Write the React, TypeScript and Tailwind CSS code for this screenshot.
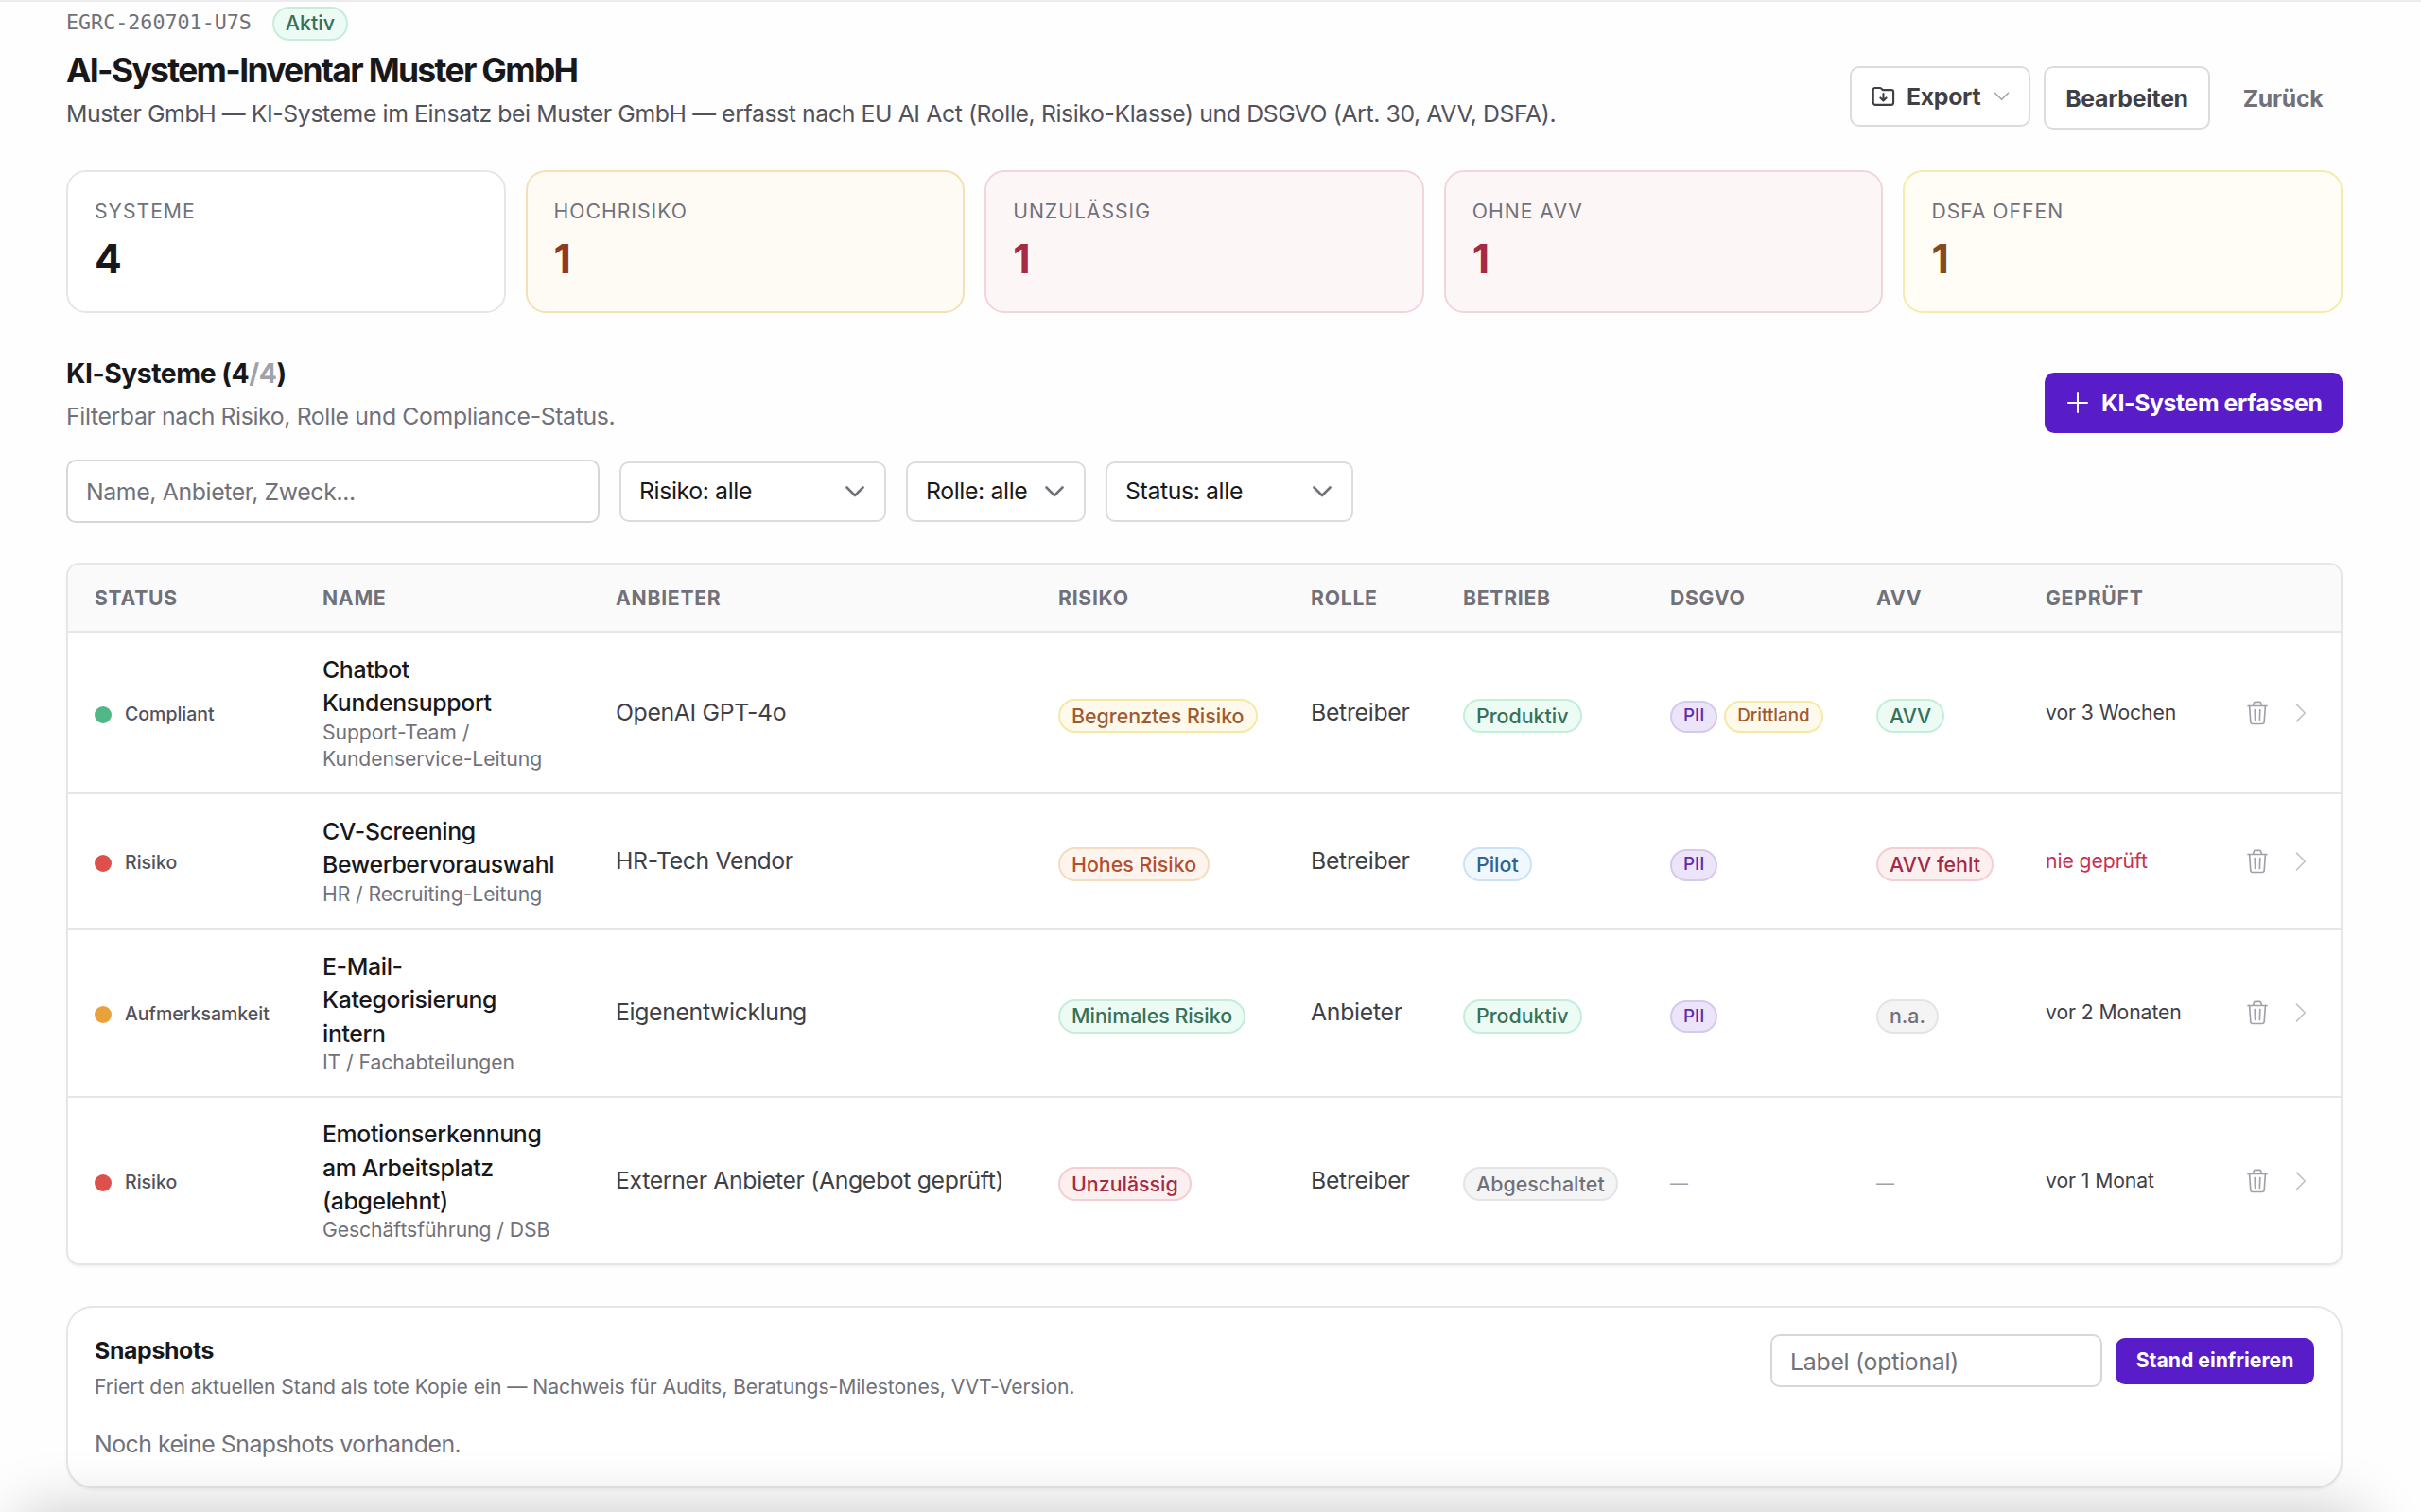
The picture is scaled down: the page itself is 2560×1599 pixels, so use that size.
import clsx from 'clsx';
import type { ReactNode } from 'react';

type Tone = 'green' | 'yellow' | 'orange' | 'red' | 'blue' | 'violet' | 'gray';

const toneClasses: Record<Tone, string> = {
  green: 'border-[#c5eeda] bg-[#ecfbf4] text-[#367158]',
  yellow: 'border-[#f5e9a6] bg-[#fefaeb] text-[#a2592f]',
  orange: 'border-[#f3dcc2] bg-[#fdf5ed] text-[#b34f2f]',
  red: 'border-[#f3cfd4] bg-[#fceff0] text-[#a52a43]',
  blue: 'border-[#cbe3f5] bg-[#f0f8fe] text-[#2d6395]',
  violet: 'border-[#d6c9ee] bg-[#ece5fa] text-[#5f2cb0]',
  gray: 'border-[#e4e4e7] bg-[#f4f4f5] text-[#71717a]',
};

const Badge = ({
  tone,
  small = false,
  children,
}: {
  tone: Tone;
  small?: boolean;
  children: ReactNode;
}) => (
  <span
    className={clsx(
      'inline-flex items-center rounded-full border-2 font-medium whitespace-nowrap',
      small
        ? 'h-[34px] px-[12px] text-[18.8px]'
        : 'h-[36px] px-[12px] text-[21.4px]',
      toneClasses[tone],
    )}
  >
    {children}
  </span>
);

const ChevronDown = ({ className }: { className?: string }) => (
  <svg
    viewBox="0 0 20 12"
    fill="none"
    stroke="currentColor"
    strokeLinecap="round"
    strokeLinejoin="round"
    className={className}
  >
    <path d="M1.5 1.5 10 10l8.5-8.5" />
  </svg>
);

const ChevronRight = () => (
  <svg
    viewBox="0 0 12 20"
    fill="none"
    stroke="currentColor"
    strokeWidth="1.7"
    strokeLinecap="round"
    strokeLinejoin="round"
    className="h-[20px] w-[12px] text-[#c4c4c8]"
  >
    <path d="M1.5 1.2 10.3 10l-8.8 8.8" />
  </svg>
);

const TrashIcon = () => (
  <svg
    viewBox="0 0 24 26"
    fill="none"
    stroke="currentColor"
    strokeWidth="1.7"
    strokeLinecap="round"
    strokeLinejoin="round"
    className="h-[26px] w-[24px] text-[#a1a1aa]"
  >
    <path d="M2 5.5h20M7.5 5.5l.6-2.6A1.8 1.8 0 0 1 9.9 1.4h4.2a1.8 1.8 0 0 1 1.8 1.5l.6 2.6" />
    <path d="m3.6 5.5 1.2 17a2.2 2.2 0 0 0 2.2 2h10a2.2 2.2 0 0 0 2.2-2l1.2-17" />
    <path d="m9.2 9.5.4 11M14.8 9.5l-.4 11" />
  </svg>
);

const FolderDownIcon = () => (
  <svg
    viewBox="0 0 26 22"
    fill="none"
    stroke="currentColor"
    strokeWidth="2.2"
    strokeLinecap="round"
    strokeLinejoin="round"
    className="h-[22px] w-[25px]"
  >
    <path d="M1.8 17.8V3.6a2 2 0 0 1 2-2h5.4a2 2 0 0 1 1.4.6l1.6 1.6h9.8a2 2 0 0 1 2 2v12a2.4 2.4 0 0 1-2.4 2.4H4.2a2.4 2.4 0 0 1-2.4-2.4Z" />
    <path d="M13 8v7.5m-3.2-3 3.2 3.2 3.2-3.2" />
  </svg>
);

const stats = [
  {
    label: 'Systeme',
    value: 4,
    box: 'border-[#e6e6e8] bg-white',
    number: 'text-[#18181b]',
  },
  {
    label: 'Hochrisiko',
    value: 1,
    box: 'border-[#f3e0b5] bg-[#fefbf5]',
    number: 'text-[#8f3a1f]',
  },
  {
    label: 'Unzulässig',
    value: 1,
    box: 'border-[#f1d5dc] bg-[#fdf6f7]',
    number: 'text-[#a52a43]',
  },
  {
    label: 'Ohne AVV',
    value: 1,
    box: 'border-[#f1d5dc] bg-[#fdf6f7]',
    number: 'text-[#a52a43]',
  },
  {
    label: 'DSFA offen',
    value: 1,
    box: 'border-[#f3ecaa] bg-[#fffdf5]',
    number: 'text-[#834a22]',
  },
];

const filters = [
  { label: 'Risiko: alle', width: 'w-[282px]' },
  { label: 'Rolle: alle', width: 'w-[190px]' },
  { label: 'Status: alle', width: 'w-[262px]' },
];

const columns = [
  { label: 'Status', width: 'w-[241px]' },
  { label: 'Name', width: 'w-[310px]' },
  { label: 'Anbieter', width: 'w-[468px]' },
  { label: 'Risiko', width: 'w-[267px]' },
  { label: 'Rolle', width: 'w-[161px]' },
  { label: 'Betrieb', width: 'w-[219px]' },
  { label: 'DSGVO', width: 'w-[218px]' },
  { label: 'AVV', width: 'w-[179px]' },
  { label: 'Geprüft', width: 'w-[212px]' },
];

type Tag = { label: string; tone: Tone };

type AiSystem = {
  status: string;
  dot: string;
  name: string[];
  owner: string[];
  vendor: string;
  risk: Tag;
  role: string;
  operation: Tag;
  gdpr: Tag[];
  avv?: Tag;
  reviewed?: string;
  height: string;
};

const systems: AiSystem[] = [
  {
    status: 'Compliant',
    dot: 'bg-[#52b788]',
    name: ['Chatbot', 'Kundensupport'],
    owner: ['Support-Team /', 'Kundenservice-Leitung'],
    vendor: 'OpenAI GPT-4o',
    risk: { label: 'Begrenztes Risiko', tone: 'yellow' },
    role: 'Betreiber',
    operation: { label: 'Produktiv', tone: 'green' },
    gdpr: [
      { label: 'PII', tone: 'violet' },
      { label: 'Drittland', tone: 'yellow' },
    ],
    avv: { label: 'AVV', tone: 'green' },
    reviewed: 'vor 3 Wochen',
    height: 'h-[171px]',
  },
  {
    status: 'Risiko',
    dot: 'bg-[#de504c]',
    name: ['CV-Screening', 'Bewerbervorauswahl'],
    owner: ['HR / Recruiting-Leitung'],
    vendor: 'HR-Tech Vendor',
    risk: { label: 'Hohes Risiko', tone: 'orange' },
    role: 'Betreiber',
    operation: { label: 'Pilot', tone: 'blue' },
    gdpr: [{ label: 'PII', tone: 'violet' }],
    avv: { label: 'AVV fehlt', tone: 'red' },
    height: 'h-[143px]',
  },
  {
    status: 'Aufmerksamkeit',
    dot: 'bg-[#e9a23b]',
    name: ['E-Mail-', 'Kategorisierung', 'intern'],
    owner: ['IT / Fachabteilungen'],
    vendor: 'Eigenentwicklung',
    risk: { label: 'Minimales Risiko', tone: 'green' },
    role: 'Anbieter',
    operation: { label: 'Produktiv', tone: 'green' },
    gdpr: [{ label: 'PII', tone: 'violet' }],
    avv: { label: 'n.a.', tone: 'gray' },
    reviewed: 'vor 2 Monaten',
    height: 'h-[178px]',
  },
  {
    status: 'Risiko',
    dot: 'bg-[#de504c]',
    name: ['Emotionserkennung', 'am Arbeitsplatz', '(abgelehnt)'],
    owner: ['Geschäftsführung / DSB'],
    vendor: 'Externer Anbieter (Angebot geprüft)',
    risk: { label: 'Unzulässig', tone: 'red' },
    role: 'Betreiber',
    operation: { label: 'Abgeschaltet', tone: 'gray' },
    gdpr: [],
    reviewed: 'vor 1 Monat',
    height: 'h-[176px]',
  },
];

const Dash = () => (
  <span className="inline-block pt-[1px] text-[19px] text-[#a1a1aa]">—</span>
);

const SystemRow = ({ system }: { system: AiSystem }) => (
  <tr
    className={clsx(
      'border-b-2 border-[#e6e6e8] whitespace-nowrap last:border-b-0',
      system.height,
    )}
  >
    <td className="pl-[28px]">
      <div className="flex items-center gap-[14px] pt-[4px] text-[19.5px] font-medium text-[#52525b]">
        <span className={clsx('size-[18px] rounded-full', system.dot)} />
        {system.status}
      </div>
    </td>
    <td className="pl-[28px]">
      {system.name.map(line => (
        <div
          key={line}
          className="text-[24.8px] leading-[35.4px] font-medium tracking-[-0.014em] text-[#18181b]"
        >
          {line}
        </div>
      ))}
      <div className="-mt-[2px] text-[21.2px] leading-[28.3px] tracking-[-0.004em] text-[#71717a]">
        {system.owner.map(line => (
          <div key={line}>{line}</div>
        ))}
      </div>
    </td>
    <td className="pl-[28px] text-[24.8px] tracking-[-0.014em] text-[#3f3f46]">
      {system.vendor}
    </td>
    <td className="pt-[7px] pl-[28px]">
      <Badge tone={system.risk.tone}>{system.risk.label}</Badge>
    </td>
    <td className="pl-[28px] text-[24.8px] tracking-[-0.012em] text-[#3f3f46]">
      {system.role}
    </td>
    <td className="pt-[7px] pl-[28px]">
      <Badge tone={system.operation.tone}>{system.operation.label}</Badge>
    </td>
    <td className="pt-[7px] pl-[28px]">
      {system.gdpr.length === 0 && <Dash />}
      <div className="flex gap-[7px] pt-[1px]">
        {system.gdpr.map(tag => (
          <Badge key={tag.label} tone={tag.tone} small>
            {tag.label}
          </Badge>
        ))}
      </div>
    </td>
    <td className="pt-[7px] pl-[28px]">
      {system.avv ? (
        <Badge tone={system.avv.tone}>{system.avv.label}</Badge>
      ) : (
        <Dash />
      )}
    </td>
    <td className="pl-[28px] text-[21.2px] tracking-[-0.004em]">
      {system.reviewed ? (
        <span className="text-[#3f3f46]">{system.reviewed}</span>
      ) : (
        <span className="text-[#c9304e]">nie geprüft</span>
      )}
    </td>
    <td className="pl-[28px]">
      <div className="flex items-center gap-[28px]">
        <TrashIcon />
        <ChevronRight />
      </div>
    </td>
  </tr>
);

const App = () => (
  <div className="relative h-[1599px] w-[2560px] overflow-hidden border-t-2 border-[#ececee] bg-[#fefefe] font-['Inter','Liberation_Sans',sans-serif] text-[#18181b]">
    <main className="flex flex-col pt-[5px] pr-[83px] pl-[70px]">
      <header className="flex h-[173px] justify-between">
        <div>
          <div className="flex h-[35px] items-center gap-[22px]">
            <span className="font-['DejaVu_Sans_Mono','Liberation_Mono',monospace] text-[21.7px] text-[#71717a]">
              EGRC-260701-U7S
            </span>
            <Badge tone="green">Aktiv</Badge>
          </div>
          <h1 className="mt-[10px] text-[35.4px] leading-[46px] font-bold tracking-[-0.047em]">
            AI-System-Inventar Muster GmbH
          </h1>
          <p className="mt-[5px] text-[24.8px] leading-[35px] tracking-[-0.016em] text-[#52525b]">
            Muster GmbH — KI-Systeme im Einsatz bei Muster GmbH — erfasst nach
            EU AI Act (Rolle, Risiko-Klasse) und DSGVO (Art. 30, AVV, DSFA).
          </p>
        </div>
        <div className="flex items-start gap-[14px] pt-[63px] text-[24.8px] font-bold tracking-[-0.012em] text-[#3f3f46]">
          <button className="flex h-[64px] w-[191px] items-center rounded-[10px] border-2 border-[#dcdcdf] bg-white pl-[21px]">
            <FolderDownIcon />
            <span className="ml-[12px] pt-[1px]">Export</span>
            <ChevronDown className="ml-[14px] h-[10px] w-[17px] stroke-[1.8] text-[#a1a1aa]" />
          </button>
          <button className="h-[67px] w-[176px] rounded-[10px] border-2 border-[#dcdcdf] bg-white pt-[2px]">
            Bearbeiten
          </button>
          <button className="h-[67px] w-[126px] pt-[2px] text-[#71717a]">
            Zurück
          </button>
        </div>
      </header>

      <section className="grid grid-cols-5 gap-[21px]">
        {stats.map(stat => (
          <div
            key={stat.label}
            className={clsx(
              'h-[151px] rounded-[21px] border-2 px-[28px] pt-[27px]',
              stat.box,
            )}
          >
            <div className="text-[21.2px] leading-[28px] tracking-[0.046em] text-[#71717a] uppercase">
              {stat.label}
            </div>
            <div
              className={clsx(
                'mt-[12px] text-[42.5px] leading-[50px] font-bold',
                stat.number,
              )}
            >
              {stat.value}
            </div>
          </div>
        ))}
      </section>

      <section className="mt-[46px] flex h-[86px] justify-between">
        <div>
          <h2 className="text-[28.3px] leading-[37px] font-bold tracking-[-0.016em]">
            KI-Systeme (4<span className="text-[#a1a1aa]">/4</span>)
          </h2>
          <p className="mt-[8px] text-[24.8px] leading-[36px] tracking-[-0.015em] text-[#71717a]">
            Filterbar nach Risiko, Rolle und Compliance-Status.
          </p>
        </div>
        <button className="mt-[17px] flex h-[64px] w-[315px] items-center rounded-[10px] bg-[#581cc8] pl-[24px] text-[24.8px] font-bold tracking-[-0.016em] text-white">
          <svg
            viewBox="0 0 22 22"
            stroke="currentColor"
            strokeWidth="2"
            strokeLinecap="round"
            className="mr-[14px] size-[22px]"
          >
            <path d="M11 1v20M1 11h20" />
          </svg>
          <span className="pt-[1px]">KI-System erfassen</span>
        </button>
      </section>

      <section className="mt-[23px] flex h-[67px] items-center gap-[21px] text-[24.8px] tracking-[-0.015em]">
        <input
          className="h-[67px] w-[564px] rounded-[10px] border-2 border-[#d7d7da] bg-white px-[19px] pt-[1px] placeholder:text-[#71717a]"
          placeholder="Name, Anbieter, Zweck..."
        />
        {filters.map(filter => (
          <button
            key={filter.label}
            className={clsx(
              'flex h-[64px] items-center justify-between rounded-[10px] border-2 border-[#dcdcdf] bg-white pr-[21px] pl-[19px]',
              filter.width,
            )}
          >
            <span className="pt-[1px]">{filter.label}</span>
            <ChevronDown className="h-[12px] w-[20px] stroke-[2.6] text-[#71717a]" />
          </button>
        ))}
      </section>

      <section className="mt-[42px] overflow-hidden rounded-[14px] border-2 border-[#e6e6e8] bg-white shadow-[0_2px_3px_rgba(0,0,0,0.05)]">
        <table className="w-full table-fixed border-collapse text-left">
          <thead>
            <tr className="h-[71px] border-b-2 border-[#e6e6e8] bg-[#fafafa]">
              {columns.map(column => (
                <th
                  key={column.label}
                  className={clsx(
                    'pt-[1px] pl-[28px] text-[21.2px] font-bold tracking-[0.034em] text-[#71717a] uppercase',
                    column.width,
                  )}
                >
                  {column.label}
                </th>
              ))}
              <th />
            </tr>
          </thead>
          <tbody>
            {systems.map(system => (
              <SystemRow key={system.vendor} system={system} />
            ))}
          </tbody>
        </table>
      </section>

      <section className="mt-[43px] h-[193px] rounded-[28px] border-2 border-[#e6e6e8] bg-white px-[28px] pt-[28px] shadow-[0_2px_3px_rgba(0,0,0,0.05)]">
        <div className="flex justify-between">
          <div>
            <h3 className="text-[24.8px] leading-[34px] font-bold tracking-[-0.013em]">
              Snapshots
            </h3>
            <p className="mt-[7px] text-[21.2px] leading-[28px] tracking-[-0.004em] text-[#71717a]">
              Friert den aktuellen Stand als tote Kopie ein — Nachweis für
              Audits, Beratungs-Milestones, VVT-Version.
            </p>
          </div>
          <div className="flex h-[56px] items-center gap-[14px]">
            <input
              className="h-[56px] w-[351px] rounded-[10px] border-2 border-[#d7d7da] bg-white px-[19px] pt-[1px] text-[24.8px] tracking-[-0.01em] placeholder:text-[#71717a]"
              placeholder="Label (optional)"
            />
            <button className="h-[49px] w-[210px] rounded-[10px] bg-[#581cc8] text-[21.2px] font-bold text-white">
              Stand einfrieren
            </button>
          </div>
        </div>
        <p className="mt-[30px] text-[24.8px] leading-[35px] tracking-[-0.019em] text-[#71717a]">
          Noch keine Snapshots vorhanden.
        </p>
      </section>
    </main>

    {/* soft shade along the lower window edge */}
    <div className="pointer-events-none absolute right-[60px] -bottom-[200px] left-[20px] h-[200px] rounded-[20px] shadow-[0_0_64px_0_rgba(0,0,0,0.22)]" />
  </div>
);

export default App;
